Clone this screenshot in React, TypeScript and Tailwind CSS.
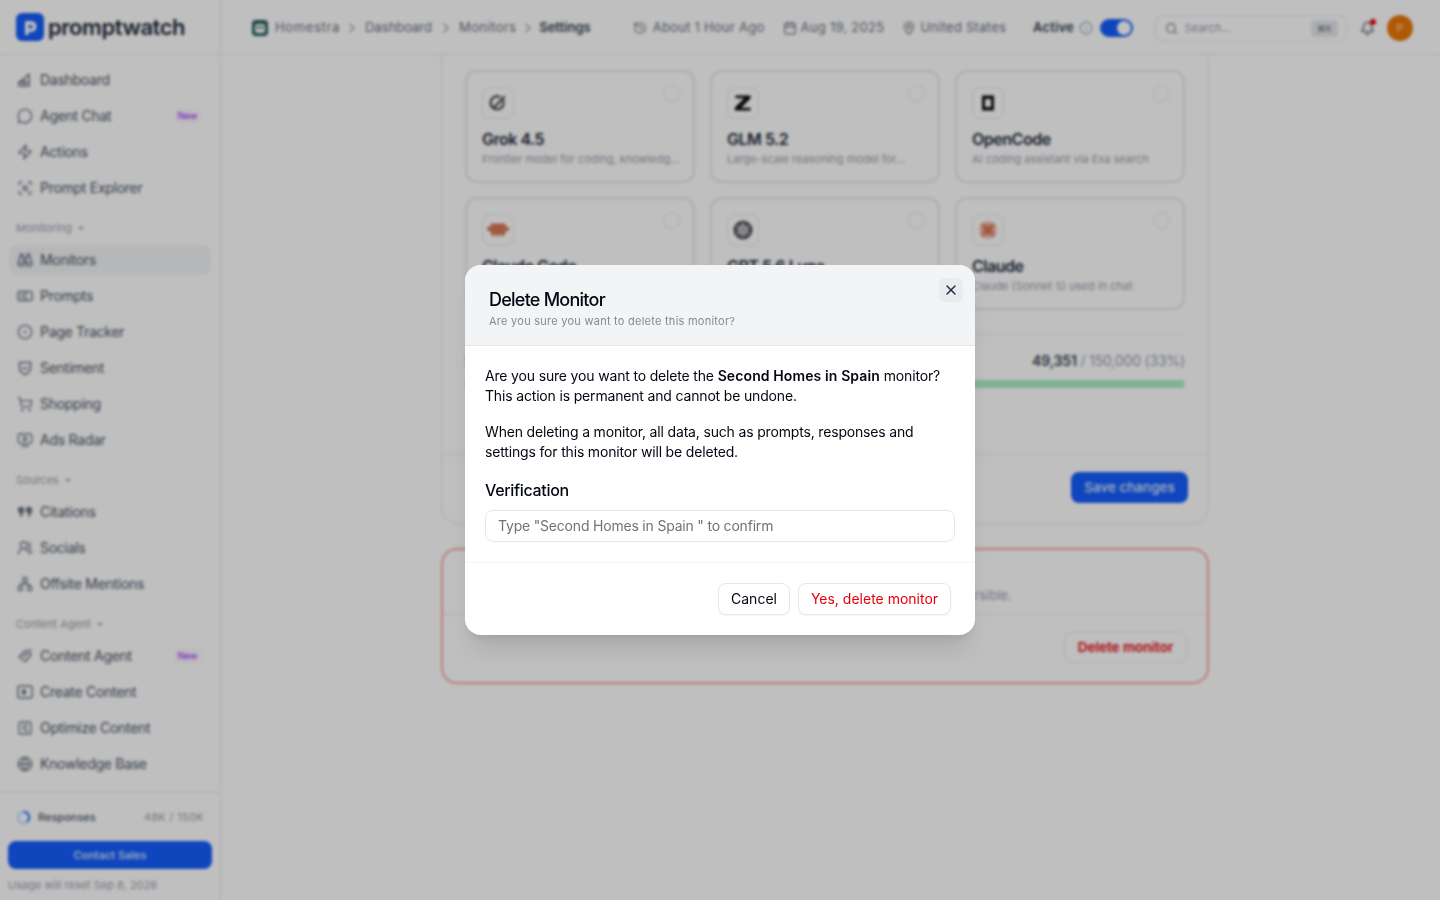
import type { ReactNode } from "react";
import {
  Binoculars,
  Calendar,
  ChevronRight,
  CircleDot,
  Globe,
  History,
  Info,
  MapPin,
  MessageCircle,
  Network,
  ScanSearch,
  Search,
  ShoppingCart,
  SquareChartGantt,
  TvMinimalPlay,
  UsersRound,
  X,
  Zap,
  Bell,
} from "lucide-react";

type NavEntry = { label: string; icon: ReactNode; badge?: boolean; active?: boolean };

const ic = "h-4 w-4 shrink-0 text-gray-500";

function DashIcon() {
  return (
    <svg viewBox="0 0 16 16" className={ic} fill="none" stroke="currentColor" strokeWidth="1.5" strokeLinejoin="round">
      <path d="M2 14V10l5-3 5-5v12z" />
      <path d="M7 7v7M2 10.5h10" />
    </svg>
  );
}
function PromptsIcon() {
  return (
    <svg viewBox="0 0 16 16" className={ic} fill="none" stroke="currentColor" strokeWidth="1.5">
      <rect x="1" y="3.5" width="14" height="9" rx="2" />
      <path d="M3.5 6.5h3M3.5 9.5h3M8.5 3.5v9" />
    </svg>
  );
}
function SentimentIcon() {
  return (
    <svg viewBox="0 0 16 16" className={ic} fill="none" stroke="currentColor" strokeWidth="1.5" strokeLinecap="round">
      <path d="M2.5 2.5h11v6c0 3-3 5-5.5 6-2.5-1-5.5-3-5.5-6z" />
      <path d="M5.5 7.5c.6 1.5 4.4 1.5 5 0" />
    </svg>
  );
}
function QuotesIcon() {
  return (
    <svg viewBox="0 0 16 16" className={ic} fill="currentColor">
      <circle cx="4" cy="6" r="3.2" />
      <circle cx="12" cy="6" r="3.2" />
      <path d="M7.2 6.5 4.5 13H3l1-6zM15.2 6.5 12.5 13H11l1-6z" />
    </svg>
  );
}
function AgentIcon() {
  return (
    <svg viewBox="0 0 16 16" className={ic} fill="none" stroke="currentColor" strokeWidth="1.5" strokeLinejoin="round">
      <path d="M8.5 2.5 14 7l-5.5 6.5L2 9z" />
      <path d="M6 8.5 10 6M11.5 1l3 3" />
    </svg>
  );
}
function CreateIcon() {
  return (
    <svg viewBox="0 0 16 16" className={ic} fill="none" stroke="currentColor" strokeWidth="1.5">
      <rect x="1" y="2" width="14" height="12" rx="2" />
      <rect x="5" y="5.5" width="4" height="5" fill="currentColor" stroke="none" />
    </svg>
  );
}

const topItems: NavEntry[] = [
  { label: "Dashboard", icon: <DashIcon /> },
  { label: "Agent Chat", icon: <MessageCircle className={ic} />, badge: true },
  { label: "Actions", icon: <Zap className={ic} /> },
  { label: "Prompt Explorer", icon: <ScanSearch className={ic} /> },
];

const monitoringItems: NavEntry[] = [
  { label: "Monitors", icon: <Binoculars className={ic} />, active: true },
  { label: "Prompts", icon: <PromptsIcon /> },
  { label: "Page Tracker", icon: <CircleDot className={ic} /> },
  { label: "Sentiment", icon: <SentimentIcon /> },
  { label: "Shopping", icon: <ShoppingCart className={ic} /> },
  { label: "Ads Radar", icon: <TvMinimalPlay className={ic} /> },
];

const sourceItems: NavEntry[] = [
  { label: "Citations", icon: <QuotesIcon /> },
  { label: "Socials", icon: <UsersRound className={ic} /> },
  { label: "Offsite Mentions", icon: <Network className={ic} /> },
];

const contentItems: NavEntry[] = [
  { label: "Content Agent", icon: <AgentIcon />, badge: true },
  { label: "Create Content", icon: <CreateIcon /> },
  { label: "Optimize Content", icon: <SquareChartGantt className={ic} /> },
  { label: "Knowledge Base", icon: <Globe className={ic} /> },
];

function NavRow({ item }: { item: NavEntry }) {
  return (
    <div
      className={`flex h-[30px] items-center gap-[7px] rounded-lg px-2 text-sm text-gray-600 ${
        item.active ? "bg-gray-100" : ""
      }`}
    >
      {item.icon}
      <span className="tracking-[-0.02em]">{item.label}</span>
      {item.badge ? (
        <span className="ml-auto mr-[2px] rounded-md bg-purple-50 px-1 text-[9px] leading-[14px] text-purple-600">New</span>
      ) : null}
    </div>
  );
}

function NavSection({ title, items }: { title: string; items: NavEntry[] }) {
  return (
    <div className="mt-[17px]">
      <div className="mb-[9px] flex h-4 items-center gap-[6px] pl-[7px] text-[11px] text-gray-400">
        {title}
        <span className="h-0 w-0 border-x-[3px] border-t-[3px] border-x-transparent border-t-gray-400" />
      </div>
      <div className="flex flex-col gap-[6px]">
        {items.map((item) => (
          <NavRow key={item.label} item={item} />
        ))}
      </div>
    </div>
  );
}

function Sidebar() {
  return (
    <aside className="flex h-full w-[221px] shrink-0 flex-col border-r border-gray-200 bg-white">
      <div className="flex h-[55px] shrink-0 items-center gap-[4px] border-b border-gray-200 pl-4">
        <svg viewBox="0 0 28 28" className="h-7 w-7 shrink-0">
          <rect width="28" height="28" rx="6" fill="#155dfc" />
          <path d="M9 22V9.5c0-1 .6-1.5 1.5-1.5H15a5 5 0 0 1 0 11h-2.5v-3.5H15a1.5 1.5 0 0 0 0-3.5h-2.5V22z" fill="#fff" />
        </svg>
        <span className="text-[22px] font-semibold leading-none tracking-[-0.02em] text-gray-800">promptwatch</span>
      </div>
      <nav className="flex flex-1 flex-col px-[9px] pt-[10px]">
        <div className="flex flex-col gap-[6px]">
          {topItems.map((item) => (
            <NavRow key={item.label} item={item} />
          ))}
        </div>
        <NavSection title="Monitoring" items={monitoringItems} />
        <NavSection title="Sources" items={sourceItems} />
        <NavSection title="Content Agent" items={contentItems} />
      </nav>
      <div className="flex h-[108px] shrink-0 flex-col border-t border-gray-200 px-2">
        <div className="mt-[14px] flex h-5 items-center px-2 text-[11px]">
          <svg viewBox="0 0 16 16" className="mr-[7px] h-[15px] w-[15px] shrink-0">
            <circle cx="8" cy="8" r="6" fill="none" stroke="#bfdbfe" strokeWidth="2" />
            <path d="M8 2a6 6 0 0 1 3.5 10.9" fill="none" stroke="#155dfc" strokeWidth="2" />
          </svg>
          <span className="font-medium text-gray-600">Responses</span>
          <span className="ml-auto tracking-[0.03em] text-gray-400">48K / 150K</span>
        </div>
        <div className="mt-[14px] flex h-7 items-center justify-center rounded-lg bg-[#155dfc] text-[11px] font-medium text-blue-100">
          Contact Sales
        </div>
        <div className="mt-[9px] text-[11px] leading-[14px] text-gray-400">Usage will reset Sep 8, 2026</div>
      </div>
    </aside>
  );
}

function Header() {
  return (
    <header className="flex h-[55px] shrink-0 items-center border-b border-gray-200 bg-white pl-[31px] pr-[27px] pt-[2px] text-[13px] text-gray-500">
      <svg viewBox="0 0 16 16" className="mr-[7px] h-4 w-4 shrink-0">
        <rect width="16" height="16" rx="4" fill="#1f5c5c" />
        <rect x="3" y="4" width="10" height="9" rx="2" fill="#fff" />
        <rect x="5" y="6" width="2" height="3" fill="#1f5c5c" />
        <rect x="9" y="6" width="2" height="3" fill="#1f5c5c" />
      </svg>
      <span className="tracking-[0.05em]">Homestra</span>
      <ChevronRight className="ml-[4px] mr-[5px] h-4 w-4 text-gray-400" />
      <span>Dashboard</span>
      <ChevronRight className="mx-[5.5px] h-4 w-4 text-gray-400" />
      <span className="tracking-[0.03em]">Monitors</span>
      <ChevronRight className="mx-[3.5px] h-4 w-4 text-gray-400" />
      <span className="font-semibold text-gray-700">Settings</span>
      <div className="ml-[42px] flex items-center gap-[6px] tracking-[0.02em]">
        <History className="h-[14px] w-[14px]" />
        About 1 Hour Ago
      </div>
      <div className="ml-[18px] flex items-center gap-[4px] tracking-[0.02em]">
        <Calendar className="h-[14px] w-[14px]" />
        Aug 19, 2025
      </div>
      <div className="ml-[18px] flex items-center gap-[4px] tracking-[0.02em]">
        <MapPin className="h-[14px] w-[14px]" />
        United States
      </div>
      <span className="ml-[27px] font-semibold tracking-[0.01em] text-gray-700">Active</span>
      <Info className="ml-[5px] h-[14px] w-[14px] text-gray-400" />
      <div className="ml-[7px] flex h-[18px] w-[33px] items-center justify-end rounded-full bg-[#155dfc] p-[2px]">
        <div className="h-[14px] w-[14px] rounded-full bg-white" />
      </div>
      <div className="ml-[22px] flex h-[27px] w-[192px] items-center rounded-lg border border-gray-200 pl-[9px] pr-2 text-[11px] text-gray-400">
        <Search className="mr-[7px] h-[13px] w-[13px] text-gray-500" />
        Search...
        <span className="ml-auto rounded bg-gray-200 px-[6px] text-[9px] leading-[17px] text-gray-500">⌘K</span>
      </div>
      <div className="relative ml-[13px]">
        <Bell className="h-[15px] w-[15px] text-gray-600" />
        <span className="absolute -right-[1px] -top-[2px] h-[6px] w-[6px] rounded-full bg-red-600" />
      </div>
      <div className="ml-[12px] flex h-[26px] w-[26px] items-center justify-center rounded-full bg-[#ea7608] text-[11px] text-orange-200">P</div>
    </header>
  );
}

function Grok() {
  return (
    <svg viewBox="0 0 16 16" className="h-[18px] w-[18px]" fill="none" stroke="#27272a" strokeWidth="1.7">
      <path d="M12.5 5.5A5.8 5.8 0 1 1 10 2.8" />
      <path d="M4 12.5 14 2" />
    </svg>
  );
}
function Glm() {
  return (
    <svg viewBox="0 0 16 16" className="h-5 w-5" fill="#09090b">
      <path d="M2 2h12v2.4L6.5 11.8H14V14H1.5v-2.4L9 4.2H2z" />
    </svg>
  );
}
function OpenCode() {
  return (
    <svg viewBox="0 0 16 16" className="h-4 w-4">
      <rect x="2" y="0.5" width="12" height="15" fill="#09090b" />
      <rect x="5" y="4" width="6" height="8" fill="#fff" />
    </svg>
  );
}
function ClaudeCode() {
  return (
    <svg viewBox="0 0 20 12" className="h-[14px] w-[22px]" fill="#d97757">
      <rect x="3" y="0" width="14" height="10" rx="1" />
      <rect x="0" y="3" width="20" height="4" rx="1" />
      <rect x="5" y="9" width="2" height="3" />
      <rect x="9" y="9" width="2" height="3" />
      <rect x="13" y="9" width="2" height="3" />
    </svg>
  );
}
function Gpt() {
  return (
    <svg viewBox="0 0 16 16" className="h-[20px] w-[20px]" fill="none" stroke="#27272a" strokeWidth="1.3">
      <circle cx="8" cy="8" r="6.8" fill="#71717a" />
      <circle cx="8" cy="8" r="3" stroke="#d4d4d8" />
      <path d="M8 1.5v13M2.4 4.8l11.2 6.4M13.6 4.8 2.4 11.2" stroke="#d4d4d8" strokeWidth="0.8" />
    </svg>
  );
}
function Claude() {
  return (
    <svg viewBox="0 0 16 16" className="h-5 w-5" stroke="#d97757" strokeWidth="1.2" strokeLinecap="round">
      <path d="M8 1v14M3 3l10 10M13 3 3 13M1 8h14M4.8 1.9l6.4 12.2M11.2 1.9 4.8 14.1M1.9 4.8l12.2 6.4M14.1 4.8 1.9 11.2" />
      <circle cx="8" cy="8" r="2.5" fill="#d97757" />
    </svg>
  );
}

const models = [
  { name: "Grok 4.5", text: "Frontier model for coding, knowledg...", icon: <Grok /> },
  { name: "GLM 5.2", text: "Large-scale reasoning model for...", icon: <Glm /> },
  { name: "OpenCode", text: "AI coding assistant via Exa search", icon: <OpenCode /> },
  { name: "Claude Code", text: "Coding agent from Anthropic", icon: <ClaudeCode /> },
  { name: "GPT 5.6 Luna", text: "Fast model for everyday use", icon: <Gpt /> },
  { name: "Claude", text: "Claude (Sonnet 5) used in chat", icon: <Claude /> },
];

function Settings() {
  return (
    <div className="ml-[220px] w-[768px]">
      <div className="-mt-[60px] rounded-2xl border border-gray-200 bg-white">
        <div className="px-[23px] pt-[74px]">
          <div className="grid grid-cols-3 gap-x-[15px] gap-y-[14px]">
            {models.map((m) => (
              <div key={m.name} className="relative h-[113px] rounded-xl border-2 border-gray-200 px-[15px] pt-[15px]">
                <div className="flex h-8 w-8 items-center justify-center rounded-lg border border-gray-200 bg-white">{m.icon}</div>
                <span className="absolute right-[13px] top-[13px] h-[17px] w-[17px] rounded-full border border-gray-200" />
                <div className="mt-[9px] text-base font-semibold leading-[22px] tracking-[-0.03em] text-gray-800">{m.name}</div>
                <div className="mt-[1px] whitespace-nowrap text-[11px] leading-4 text-gray-400">{m.text}</div>
              </div>
            ))}
          </div>
          <div className="mt-[24px] border-t border-gray-200 pt-[16px]">
            <div className="flex h-[20px] items-center justify-between text-sm tracking-[-0.012em]">
              <span className="text-gray-500">Monthly responses</span>
              <span className="text-gray-400">
                <b className="font-semibold text-gray-700">49,351</b> / 150,000 (33%)
              </span>
            </div>
            <div className="mt-[9px] h-2 rounded-full bg-[#a8f0c6]" />
          </div>
        </div>
        <div className="mt-[66px] flex h-[69px] items-start justify-end border-t border-gray-200 px-[20px] pt-[17px]">
          <div className="flex h-[31px] w-[117px] items-center justify-center rounded-lg bg-[#155dfc] text-[13.5px] font-medium text-blue-100">Save changes</div>
        </div>
      </div>
      <div className="mt-[24px] h-[136px] rounded-2xl border-2 border-red-300 bg-white">
        <div className="flex h-[64px] flex-col justify-center px-6 pt-[28px]">
          <div className="whitespace-nowrap text-[13px] text-gray-400">Deleting this monitor removes all of its own data for good. This action is fully irreversible.</div>
        </div>
        <div className="flex h-[68px] items-start justify-end border-t border-red-100 px-[20px] pt-[17px]">
          <div className="flex h-[31px] w-[123px] items-center justify-center rounded-lg border border-gray-200 text-[13.5px] font-semibold text-red-600">Delete monitor</div>
        </div>
      </div>
    </div>
  );
}

function DeleteModal() {
  return (
    <div className="absolute inset-0 z-10 flex items-start justify-center bg-black/25 pt-[265px] backdrop-blur-[1.5px]">
      <div className="relative w-[510px] overflow-hidden rounded-2xl bg-white shadow-xl">
        <div className="h-[81px] border-b border-gray-200 bg-gray-100 px-6 pt-[24px]">
          <div className="text-lg font-medium leading-[22px] tracking-[-0.042em] text-gray-950">Delete Monitor</div>
          <div className="mt-[1px] text-[11px] leading-[18px] tracking-[0.023em] text-[#858a92]">Are you sure you want to delete this monitor?</div>
        </div>
        <button className="absolute right-[12px] top-[13px] flex h-6 w-6 items-center justify-center rounded-md bg-gray-200/70 text-gray-800">
          <X className="h-4 w-4" />
        </button>
        <div className="h-[217px] border-b border-gray-100 px-5 pt-[20px] text-sm leading-5 tracking-[-0.012em] text-gray-950">
          <p>
            Are you sure you want to delete the <b className="font-semibold tracking-[0.008em]">Second Homes in Spain</b> monitor? This action is permanent and cannot be undone.
          </p>
          <p className="mt-4">When deleting a monitor, all data, such as prompts, responses and settings for this monitor will be deleted.</p>
          <div className="mt-[18px] text-base font-medium leading-5 tracking-[-0.02em]">Verification</div>
          <input
            readOnly
            placeholder={'Type "Second Homes in Spain " to confirm'}
            className="mt-[9.5px] h-8 w-full rounded-lg border border-gray-200 px-3 text-sm tracking-[-0.014em] outline-none placeholder:text-neutral-500"
          />
        </div>
        <div className="flex h-[72px] items-start justify-end gap-2 px-6 pt-[20px]">
          <button className="h-8 w-[72px] rounded-lg border border-gray-200 text-sm text-gray-950 shadow-xs">Cancel</button>
          <button className="h-8 w-[153px] rounded-lg border border-gray-200 text-sm text-[#e7000b] shadow-xs">Yes, delete monitor</button>
        </div>
      </div>
    </div>
  );
}

export default function App() {
  return (
    <div className="relative flex h-[900px] w-[1440px] overflow-hidden bg-white font-['Inter',sans-serif]">
      <Sidebar />
      <div className="flex min-w-0 flex-1 flex-col">
        <Header />
        <main className="min-h-0 flex-1 overflow-hidden">
          <Settings />
        </main>
      </div>
      <DeleteModal />
    </div>
  );
}
